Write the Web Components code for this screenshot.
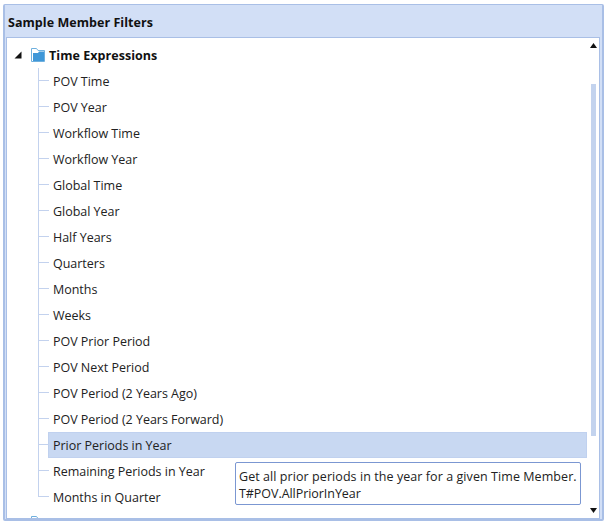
<!DOCTYPE html>
<html>
<head>
<meta charset="utf-8">
<title>Sample Member Filters</title>
<style>
  html, body { margin: 0; height: 100%; background: #fff; overflow: hidden; }
  body { padding: 4px 3px 5px; box-sizing: border-box; font-family: "Open Sans", "Liberation Sans", sans-serif; }
</style>
</head>
<body>
<filter-panel heading="Sample Member Filters">
  <tree-group label="Time Expressions">
    <tree-leaf>POV Time</tree-leaf>
    <tree-leaf>POV Year</tree-leaf>
    <tree-leaf>Workflow Time</tree-leaf>
    <tree-leaf>Workflow Year</tree-leaf>
    <tree-leaf>Global Time</tree-leaf>
    <tree-leaf>Global Year</tree-leaf>
    <tree-leaf>Half Years</tree-leaf>
    <tree-leaf>Quarters</tree-leaf>
    <tree-leaf>Months</tree-leaf>
    <tree-leaf>Weeks</tree-leaf>
    <tree-leaf>POV Prior Period</tree-leaf>
    <tree-leaf>POV Next Period</tree-leaf>
    <tree-leaf>POV Period (2 Years Ago)</tree-leaf>
    <tree-leaf>POV Period (2 Years Forward)</tree-leaf>
    <tree-leaf selected>Prior Periods in Year</tree-leaf>
    <tree-leaf>Remaining Periods in Year</tree-leaf>
    <tree-leaf last>Months in Quarter</tree-leaf>
  </tree-group>
  <tree-group label="" collapsed></tree-group>
  <tip-box slot="overlay">Get all prior periods in the year for a given Time Member.<br><span style="letter-spacing:-0.05px">T#POV.AllPriorInYear</span></tip-box>
</filter-panel>

<script>
// outer panel with the blue title bar, tree area and scrollbar
class FilterPanel extends HTMLElement {
  constructor() {
    super();
    this.attachShadow({ mode: "open" });
  }

  connectedCallback() {
    this.shadowRoot.innerHTML = `
      <style>
        :host {
          display: flex;
          flex-direction: column;
          height: 100%;
          box-sizing: border-box;
          border: 2px solid #a9bfe6;
          border-top-width: 1px;
          background: #d2dff6;
          border-radius: 2px;
        }
        .title {
          height: 32px;
          flex: none;
          box-sizing: border-box;
          display: flex;
          align-items: center;
          padding: 2px 0 0 3px;
          font-size: 12.5px;
          letter-spacing: 0.05px;
          font-weight: 700;
          color: #111;
        }
        .body {
          position: relative;
          flex: 1;
          min-height: 0;
          margin: 0 2px 0 1px;
          display: flex;
          background: #fff;
          border: 1px solid #a9bfe6;
          overflow: hidden;
        }
        .tree { flex: 1; min-width: 0; padding-top: 4px; overflow: hidden; }
      </style>
      <div class="title">${this.getAttribute("heading")}</div>
      <div class="body">
        <div class="tree"><slot></slot></div>
        <scroll-bar></scroll-bar>
        <slot name="overlay"></slot>
      </div>
    `;
  }
}
customElements.define("filter-panel", FilterPanel);

// folder node, expanded or collapsed
class TreeGroup extends HTMLElement {
  constructor() {
    super();
    this.attachShadow({ mode: "open" });
  }

  connectedCallback() {
    const collapsed = this.hasAttribute("collapsed");
    this.shadowRoot.innerHTML = `
      <style>
        :host { display: block; }
        .row {
          height: 26px;
          display: flex;
          align-items: center;
          padding-left: 7px;
          font-size: 12.5px;
          letter-spacing: 0.05px;
          font-weight: 700;
          color: #111;
        }
        .arrow { width: 8px; height: 8px; flex: none; }
        .folder { width: 14px; height: 14px; margin: 0 4px 0 9px; flex: none; }
      </style>
      <div class="row">
        <svg class="arrow" viewBox="0 0 8 8"><path d="M7.5 0.5V7.5H0.5Z" fill="#111"/></svg>
        <svg class="folder" viewBox="0 0 14 14">
          <path d="M0.5 0.5H5.5L7 2.5H13.5V13.5H0.5Z" fill="#fff" stroke="#6fb0de"/>
          <path d="M2 5H7L8 3.5H13V13H2Z" fill="#3f97d8"/>
        </svg>
        <span>${this.getAttribute("label")}</span>
      </div>
      ${collapsed ? "" : "<slot></slot>"}
    `;
  }
}
customElements.define("tree-group", TreeGroup);

class TreeLeaf extends HTMLElement {
  constructor() {
    super();
    this.attachShadow({ mode: "open" });
    this.shadowRoot.innerHTML = `
      <style>
        :host {
          display: block;
          position: relative;
          height: 26px;
          font-size: 12.5px;
          letter-spacing: -0.02px;
          color: #222;
        }
        .line-v {
          position: absolute;
          left: 31px;
          top: 0;
          bottom: 0;
          width: 1px;
          background: #c3d2ee;
        }
        :host([last]) .line-v { bottom: 13px; }
        .line-h {
          position: absolute;
          left: 31px;
          top: 12px;
          width: 11px;
          height: 1px;
          background: #c3d2ee;
        }
        .text {
          display: flex;
          align-items: center;
          height: 100%;
          box-sizing: border-box;
          margin: 0 0 0 41px;
          padding-left: 5px;
        }
        :host([selected]) .text {
          background: #c8d8f2;
          outline: 1px solid #c0d1ef;
          outline-offset: -1px;
        }
      </style>
      <span class="line-v"></span>
      <span class="line-h"></span>
      <div class="text"><slot></slot></div>
    `;
  }
}
customElements.define("tree-leaf", TreeLeaf);

class ScrollBar extends HTMLElement {
  constructor() {
    super();
    this.attachShadow({ mode: "open" });
    this.shadowRoot.innerHTML = `
      <style>
        :host {
          display: flex;
          flex-direction: column;
          align-items: center;
          width: 12px;
          flex: none;
          padding: 5px 0;
          box-sizing: border-box;
        }
        svg { width: 7px; height: 5px; flex: none; }
        .track { flex: 1; width: 100%; display: flex; justify-content: center; }
        .thumb { width: 5px; height: 352px; margin-top: 36px; background: #c3d3ee; }
      </style>
      <svg viewBox="0 0 7 5"><path d="M3.5 0L7 5H0Z" fill="#111"/></svg>
      <div class="track"><div class="thumb"></div></div>
      <svg viewBox="0 0 7 5"><path d="M0 0H7L3.5 5Z" fill="#111"/></svg>
    `;
  }
}
customElements.define("scroll-bar", ScrollBar);

// hover tooltip, lies over the tree
class TipBox extends HTMLElement {
  constructor() {
    super();
    this.attachShadow({ mode: "open" });
    this.shadowRoot.innerHTML = `
      <style>
        :host {
          position: absolute;
          left: 228px;
          top: 424px;
          width: 346px;
          height: 43px;
          box-sizing: border-box;
          padding: 5px 3px 0;
          background: #fff;
          border: 1px solid #7b97d2;
          border-radius: 2px;
          font-size: 12.5px;
          letter-spacing: 0.07px;
          line-height: 17px;
          color: #222;
          white-space: nowrap;
        }
      </style>
      <slot></slot>
    `;
  }
}
customElements.define("tip-box", TipBox);
</script>
</body>
</html>
